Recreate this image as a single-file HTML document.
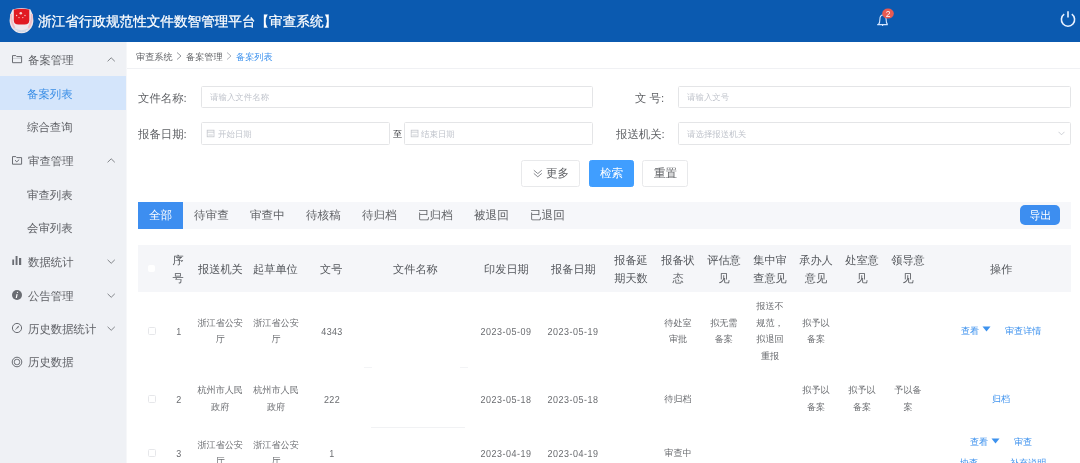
<!DOCTYPE html>
<html><head><meta charset="utf-8">
<style>
*{margin:0;padding:0;box-sizing:border-box}
html,body{width:1080px;height:463px;overflow:hidden;background:#fff;font-family:"Liberation Sans",sans-serif;color:#606266;text-rendering:geometricPrecision}
.a{position:absolute;white-space:nowrap}
#hd{position:absolute;left:0;top:0;width:1080px;height:42px;background:#0b5ab0}
#title{position:absolute;left:38px;top:12.5px;font-size:13.6px;line-height:18px;color:#fff;-webkit-text-stroke:0.25px #fff}
#sb{position:absolute;left:0;top:42px;width:127px;height:421px;background:#eff1f5;border-right:1px solid #f6f7f9}
.mi{position:absolute;left:0;width:126px;height:34px;font-size:11.4px;line-height:35.5px;color:#5f6166}
.mi .t{position:absolute;left:28px;top:2px}
.mi.sub .t{left:27px}
.mi.act{background:#d4e5fb;color:#3a8ee6}
.crumb{position:absolute;left:136px;top:50px;font-size:9.15px;line-height:14px;color:#606266}
#bcline{position:absolute;left:127px;top:68px;width:953px;height:1px;background:#f0f1f4}
.lbl{position:absolute;font-size:11.4px;line-height:16px;color:#606266}
.inp{position:absolute;border:1px solid #e4e5e7;border-radius:1.5px;background:#fff}
.ph{position:absolute;font-size:8.45px;line-height:12px;color:#c0c4cc}
.btn{position:absolute;border:1px solid #e8e9eb;border-radius:2.5px;background:#fff;font-size:11px;line-height:26px;text-align:center;color:#606266}
#tabs{position:absolute;left:138px;top:202px;width:933px;height:27px;background:#f6f7fa}
.tab{position:absolute;top:0;height:27px;line-height:27px;font-size:11.6px;color:#606266}
.th{position:absolute;font-size:11.2px;line-height:17.5px;color:#54575c;text-align:center}
.td{position:absolute;font-size:9.1px;line-height:16.6px;color:#6a6c70;text-align:center}
.lk{color:#3d92ee}
</style></head><body><div style="position:absolute;left:0;top:0;width:1080px;height:463px;will-change:transform">
<div id="hd">
  <svg class="a" style="left:9px;top:7px" width="25" height="27" viewBox="0 0 25 27">
    <path d="M3.5 2.5 Q12.5 -0.5 21.5 2.5 Q24.8 8 24.3 15 Q23.8 21 18 25 Q12.5 27.5 7 25 Q1.2 21 0.7 15 Q0.2 8 3.5 2.5 Z" fill="#eee8ed"/>
    <path d="M2.2 7 Q1.8 15 5.5 21 M22.8 7 Q23.2 15 19.5 21" stroke="#f1bfc6" stroke-width="2" fill="none"/>
    <path d="M5 21.5 Q12.5 26 20 21.5" stroke="#d5dbe8" stroke-width="1.2" fill="none"/>
    <path d="M8 24 Q12.5 25.5 17 24" stroke="#c8d3e6" stroke-width="0.8" fill="none"/>
    <path d="M4.8 2.4 Q12.5 1.2 20.3 2.4 L20.3 13.5 Q20.3 17.3 15.5 17.5 L9.5 17.5 Q4.8 17.3 4.8 13.5 Z" fill="#e11a22"/>
    <circle cx="11.8" cy="6.3" r="1.3" fill="#f6d0cc"/>
    <circle cx="7.6" cy="8.5" r=".7" fill="#f6d0cc"/><circle cx="16" cy="8.5" r=".7" fill="#f6d0cc"/>
    <circle cx="10" cy="10.6" r=".7" fill="#f6d0cc"/><circle cx="13.8" cy="10.6" r=".7" fill="#f6d0cc"/>
  </svg>
  <div id="title">浙江省行政规范性文件数智管理平台【审查系统】</div>
  <svg class="a" style="left:876px;top:8px" width="20" height="20" viewBox="0 0 20 20">
    <path d="M1.2 16.6 H11.8 M2.4 16.6 Q3.9 15.2 3.9 11.2 Q3.9 7 7 7 Q10.1 7 10.1 11.2 Q10.1 15.2 11.6 16.6 M6.6 16.8 V18" stroke="#d6e6ff" stroke-width="1.1" fill="none"/>
    <ellipse cx="12" cy="5.6" rx="5.8" ry="5" fill="#e85a52"/>
    <text x="12" y="8.7" font-size="8.5" fill="#fff" text-anchor="middle" font-family="Liberation Sans">2</text>
  </svg>
  <svg class="a" style="left:1059px;top:10px" width="18" height="18" viewBox="0 0 18 18">
    <path d="M5.2 4.2 A6.6 6.6 0 1 0 12.8 4.2" stroke="#e8f1ff" stroke-width="1.6" fill="none"/>
    <path d="M9 1.2 L9 7.5" stroke="#e8f1ff" stroke-width="1.6"/>
  </svg>
</div>
<div id="sb">
  <div class="mi" style="top:0"><span class="t">备案管理</span></div>
  <div class="mi sub act" style="top:34px"><span class="t">备案列表</span></div>
  <div class="mi sub" style="top:66.5px"><span class="t">综合查询</span></div>
  <div class="mi" style="top:100.5px"><span class="t">审查管理</span></div>
  <div class="mi sub" style="top:135px"><span class="t">审查列表</span></div>
  <div class="mi sub" style="top:168px"><span class="t">会审列表</span></div>
  <div class="mi" style="top:202px"><span class="t">数据统计</span></div>
  <div class="mi" style="top:235.5px"><span class="t">公告管理</span></div>
  <div class="mi" style="top:269px"><span class="t">历史数据统计</span></div>
  <div class="mi" style="top:302px"><span class="t">历史数据</span></div>
</div>

<svg class="a" style="left:11px;top:54px" width="12" height="11" viewBox="0 0 12 11"><path d="M1.5 1.6 H4.8 L5.8 2.6 H10.6 V8.7 H1.5 Z" stroke="#6a6d73" stroke-width="1" fill="none"/><path d="M2 4.4 H10" stroke="#b5b8bd" stroke-width=".6"/></svg>
<svg class="a" style="left:106px;top:56px" width="10" height="7" viewBox="0 0 10 7"><path d="M1.6 5.3 L5.2 1.8 L8.8 5.3" stroke="#75787d" stroke-width="0.9" fill="none"/></svg>
<svg class="a" style="left:11px;top:155px" width="12" height="11" viewBox="0 0 12 11"><path d="M1.5 1.6 H4.8 L5.8 2.6 H10.6 V9.2 H1.5 Z" stroke="#6a6d73" stroke-width="1" fill="none"/><path d="M4 5.2 L5.8 6.8 L8.2 4.6" stroke="#6a6d73" stroke-width="1" fill="none"/></svg>
<svg class="a" style="left:106px;top:157px" width="10" height="7" viewBox="0 0 10 7"><path d="M1.6 5.3 L5.2 1.8 L8.8 5.3" stroke="#75787d" stroke-width="0.9" fill="none"/></svg>
<svg class="a" style="left:11px;top:255px" width="12" height="11" viewBox="0 0 12 11"><rect x="1.3" y="4.5" width="1.8" height="5.5" fill="#6a6d73"/><rect x="4.6" y="1" width="1.9" height="9" fill="#6a6d73"/><rect x="8" y="3" width="2.2" height="7" fill="#6a6d73"/></svg>
<svg class="a" style="left:106px;top:258px" width="10" height="7" viewBox="0 0 10 7"><path d="M1.6 1.8 L5.2 5.3 L8.8 1.8" stroke="#75787d" stroke-width="0.9" fill="none"/></svg>
<svg class="a" style="left:11px;top:289px" width="12" height="12" viewBox="0 0 12 12"><circle cx="6" cy="6" r="5" fill="#6a6d73"/><path d="M6.6 3 L6.4 3.9 M6.1 5.2 L5.3 9" stroke="#fff" stroke-width="1.2"/></svg>
<svg class="a" style="left:106px;top:292px" width="10" height="7" viewBox="0 0 10 7"><path d="M1.6 1.8 L5.2 5.3 L8.8 1.8" stroke="#75787d" stroke-width="0.9" fill="none"/></svg>
<svg class="a" style="left:11px;top:322px" width="12" height="12" viewBox="0 0 12 12"><circle cx="6" cy="6" r="4.6" stroke="#6a6d73" stroke-width="1" fill="none"/><path d="M3.6 8.4 L6.6 4.6 L8.4 3.6 L7.4 5.4 Z" fill="#6a6d73"/></svg>
<svg class="a" style="left:106px;top:325px" width="10" height="7" viewBox="0 0 10 7"><path d="M1.6 1.8 L5.2 5.3 L8.8 1.8" stroke="#75787d" stroke-width="0.9" fill="none"/></svg>
<svg class="a" style="left:11px;top:356px" width="12" height="12" viewBox="0 0 12 12"><circle cx="6" cy="6" r="4.8" stroke="#6a6d73" stroke-width="1" fill="none"/><rect x="3.4" y="3.4" width="5.2" height="5.2" rx="2" stroke="#6a6d73" stroke-width="1" fill="none"/></svg>

<div class="lbl" style="left:138px;top:90.5px">文件名称:</div>
<div class="inp" style="left:201px;top:86px;width:392px;height:22px"></div>
<div class="ph" style="left:210px;top:91.2px">请输入文件名称</div>
<div class="lbl" style="left:635px;top:90.5px">文&nbsp;号:</div>
<div class="inp" style="left:678px;top:86px;width:393px;height:22px"></div>
<div class="ph" style="left:687px;top:91.2px">请输入文号</div>

<div class="lbl" style="left:138px;top:126.5px">报备日期:</div>
<div class="inp" style="left:201px;top:122px;width:189px;height:23px"></div>
<svg class="a" style="left:206px;top:129px" width="10" height="10" viewBox="0 0 10 10"><rect x="1.2" y="1.2" width="6.8" height="6.6" stroke="#c3c6cc" stroke-width=".8" fill="none"/><path d="M1.2 3.2 H8 M2.4 6 H6.8" stroke="#c3c6cc" stroke-width=".8"/></svg>
<div class="ph" style="left:218px;top:127.7px">开始日期</div>
<div class="lbl" style="left:393px;top:125.5px;font-size:9.2px;color:#3a3c40">至</div>
<div class="inp" style="left:404px;top:122px;width:189px;height:23px"></div>
<svg class="a" style="left:409.5px;top:129px" width="10" height="10" viewBox="0 0 10 10"><rect x="1.2" y="1.2" width="6.8" height="6.6" stroke="#c3c6cc" stroke-width=".8" fill="none"/><path d="M1.2 3.2 H8 M2.4 6 H6.8" stroke="#c3c6cc" stroke-width=".8"/></svg>
<div class="ph" style="left:421px;top:127.7px">结束日期</div>
<div class="lbl" style="left:616px;top:126.5px">报送机关:</div>
<div class="inp" style="left:678px;top:122px;width:393px;height:23px"></div>
<div class="ph" style="left:687px;top:127.7px">请选择报送机关</div>
<svg class="a" style="left:1058px;top:131px" width="7" height="5" viewBox="0 0 7 5"><path d="M.5 .8 L3.5 3.8 L6.5 .8" stroke="#c0c4cc" stroke-width=".8" fill="none"/></svg>

<div class="btn" style="left:521px;top:160px;width:59px;height:27px"></div>
<svg class="a" style="left:533px;top:168.5px" width="10" height="10" viewBox="0 0 10 10"><path d="M.8 1.2 L4.8 4.6 L8.8 1.2 M.8 4.4 L4.8 7.8 L8.8 4.4" stroke="#7a7d83" stroke-width=".9" fill="none"/></svg>
<div class="lbl" style="left:546px;top:166px;font-size:11.6px">更多</div>
<div class="btn" style="left:589px;top:160px;width:45px;height:27px;background:#409eff;border-color:#409eff;color:#fff"></div>
<div class="lbl" style="left:600px;top:166px;font-size:11.6px;color:#fff">检索</div>
<div class="btn" style="left:642px;top:160px;width:46px;height:27px"></div>
<div class="lbl" style="left:654px;top:166px;font-size:11.6px">重置</div>

<div id="tabs"></div>
<div class="a" style="left:138px;top:202px;width:45px;height:27px;background:#3d8ef0"></div>
<div class="tab a" style="left:149px;top:201.5px;color:#fff">全部</div>
<div class="tab a" style="left:194px;top:201.5px">待审查</div>
<div class="tab a" style="left:250px;top:201.5px">审查中</div>
<div class="tab a" style="left:306px;top:201.5px">待核稿</div>
<div class="tab a" style="left:362px;top:201.5px">待归档</div>
<div class="tab a" style="left:418px;top:201.5px">已归档</div>
<div class="tab a" style="left:474px;top:201.5px">被退回</div>
<div class="tab a" style="left:530px;top:201.5px">已退回</div>
<div class="a" style="left:1020px;top:205px;width:40px;height:20px;border-radius:5px;background:#3d8ef0"></div>
<div class="tab a" style="left:1029.5px;top:202px;color:#fff;line-height:28px;font-size:11px">导出</div>

<div class="a" style="left:138px;top:245px;width:933px;height:47px;background:#f5f6f9"></div>
<div class="a" style="left:148px;top:265px;width:7px;height:7px;border-radius:2px;background:#fff"></div>
<div class="th" style="left:168px;top:253.2px;width:20px">序<br>号</div>
<div class="th a" style="left:198px;top:262px">报送机关</div>
<div class="th a" style="left:253px;top:262px">起草单位</div>
<div class="th a" style="left:320px;top:262px">文号</div>
<div class="th a" style="left:393px;top:262px">文件名称</div>
<div class="th a" style="left:484px;top:262px">印发日期</div>
<div class="th a" style="left:551px;top:262px">报备日期</div>
<div class="th" style="left:608px;top:253.2px;width:46px">报备延<br>期天数</div>
<div class="th" style="left:655px;top:253.2px;width:46px">报备状<br>态</div>
<div class="th" style="left:701px;top:253.2px;width:46px">评估意<br>见</div>
<div class="th" style="left:747px;top:253.2px;width:46px">集中审<br>查意见</div>
<div class="th" style="left:793px;top:253.2px;width:46px">承办人<br>意见</div>
<div class="th" style="left:839px;top:253.2px;width:46px">处室意<br>见</div>
<div class="th" style="left:885px;top:253.2px;width:46px">领导意<br>见</div>
<div class="th a" style="left:990px;top:262px">操作</div>
<!--rows-->
<div class="a" style="left:148px;top:327.3px;width:8px;height:8px;border:1px solid #e6e7ea;border-radius:1.5px;background:#fff"></div>
<div class="td" style="left:144.0px;top:325px;width:70px;font-size:10.2px;letter-spacing:0.4px;transform:scaleX(0.88)">1</div>
<div class="td" style="left:185.2px;top:314.9px;width:70px">浙江省公安<br>厅</div>
<div class="td" style="left:241.0px;top:314.9px;width:70px">浙江省公安<br>厅</div>
<div class="td" style="left:297.4px;top:325px;width:70px;font-size:10.2px;letter-spacing:0.4px;transform:scaleX(0.88)">4343</div>
<div class="td" style="left:471.3px;top:325px;width:70px;font-size:10.2px;letter-spacing:0.6px;transform:scaleX(0.88)">2023-05-09</div>
<div class="td" style="left:538.4px;top:325px;width:70px;font-size:10.2px;letter-spacing:0.6px;transform:scaleX(0.88)">2023-05-19</div>
<div class="td" style="left:643.0px;top:314.9px;width:70px">待处室<br>审批</div>
<div class="td" style="left:688.8px;top:314.9px;width:70px">拟无需<br>备案</div>
<div class="td" style="left:735.0px;top:298.3px;width:70px">报送不<br>规范，<br>拟退回<br>重报</div>
<div class="td" style="left:781.0px;top:314.9px;width:70px">拟予以<br>备案</div>
<div class="td a lk" style="left:961px;top:323.2px">查看</div><svg class="a" style="left:982px;top:326px" width="9" height="6" viewBox="0 0 9 6"><path d="M.5 .5 H8.5 L4.5 5.5 Z" fill="#3d92ee"/></svg>
<div class="td a lk" style="left:1005px;top:323.2px">审查详情</div>
<div class="a" style="left:148px;top:394.8px;width:8px;height:8px;border:1px solid #e6e7ea;border-radius:1.5px;background:#fff"></div>
<div class="td" style="left:144.0px;top:392.5px;width:70px;font-size:10.2px;letter-spacing:0.4px;transform:scaleX(0.88)">2</div>
<div class="td" style="left:185.2px;top:382.4px;width:70px">杭州市人民<br>政府</div>
<div class="td" style="left:241.0px;top:382.4px;width:70px">杭州市人民<br>政府</div>
<div class="td" style="left:297.4px;top:392.5px;width:70px;font-size:10.2px;letter-spacing:0.4px;transform:scaleX(0.88)">222</div>
<div class="td" style="left:471.3px;top:392.5px;width:70px;font-size:10.2px;letter-spacing:0.6px;transform:scaleX(0.88)">2023-05-18</div>
<div class="td" style="left:538.4px;top:392.5px;width:70px;font-size:10.2px;letter-spacing:0.6px;transform:scaleX(0.88)">2023-05-18</div>
<div class="td" style="left:643.0px;top:390.7px;width:70px">待归档</div>
<div class="td" style="left:781.0px;top:382.4px;width:70px">拟予以<br>备案</div>
<div class="td" style="left:827.0px;top:382.4px;width:70px">拟予以<br>备案</div>
<div class="td" style="left:873.0px;top:382.4px;width:70px">予以备<br>案</div>
<div class="td a lk" style="left:992px;top:390.7px">归档</div>
<div class="a" style="left:148px;top:449.3px;width:8px;height:8px;border:1px solid #e6e7ea;border-radius:1.5px;background:#fff"></div>
<div class="td" style="left:144.0px;top:447px;width:70px;font-size:10.2px;letter-spacing:0.4px;transform:scaleX(0.88)">3</div>
<div class="td" style="left:185.2px;top:436.9px;width:70px">浙江省公安<br>厅</div>
<div class="td" style="left:241.0px;top:436.9px;width:70px">浙江省公安<br>厅</div>
<div class="td" style="left:297.4px;top:447px;width:70px;font-size:10.2px;letter-spacing:0.4px;transform:scaleX(0.88)">1</div>
<div class="td" style="left:471.3px;top:447px;width:70px;font-size:10.2px;letter-spacing:0.6px;transform:scaleX(0.88)">2023-04-19</div>
<div class="td" style="left:538.4px;top:447px;width:70px;font-size:10.2px;letter-spacing:0.6px;transform:scaleX(0.88)">2023-04-19</div>
<div class="td" style="left:643.0px;top:445.2px;width:70px">审查中</div>
<div class="td a lk" style="left:970px;top:433.9px">查看</div><svg class="a" style="left:991px;top:438px" width="9" height="6" viewBox="0 0 9 6"><path d="M.5 .5 H8.5 L4.5 5.5 Z" fill="#3d92ee"/></svg>
<div class="td a lk" style="left:1014px;top:433.9px">审查</div>
<div class="td a lk" style="left:960px;top:454.7px">协查</div>
<div class="td a lk" style="left:1010px;top:454.7px">补充说明</div>
<div class="a" style="left:364px;top:367px;width:8px;height:1px;background:#f3f4f6"></div><div class="a" style="left:460px;top:367px;width:8px;height:1px;background:#f3f4f6"></div>
<div class="a" style="left:371px;top:427px;width:94px;height:1px;background:#f1f2f4"></div>
<!--/rows-->
<div class="crumb" style="left:136px">审查系统</div>
<svg class="a" style="left:176px;top:52px" width="6" height="8" viewBox="0 0 6 8"><path d="M1 0.5 L5 4 L1 7.5" stroke="#8a8d93" stroke-width="0.9" fill="none"/></svg>
<div class="crumb" style="left:186px">备案管理</div>
<svg class="a" style="left:226px;top:52px" width="6" height="8" viewBox="0 0 6 8"><path d="M1 0.5 L5 4 L1 7.5" stroke="#a8abb2" stroke-width="0.9" fill="none"/></svg>
<div class="crumb lk" style="left:236px">备案列表</div>
<div id="bcline"></div>
</div></body></html>
